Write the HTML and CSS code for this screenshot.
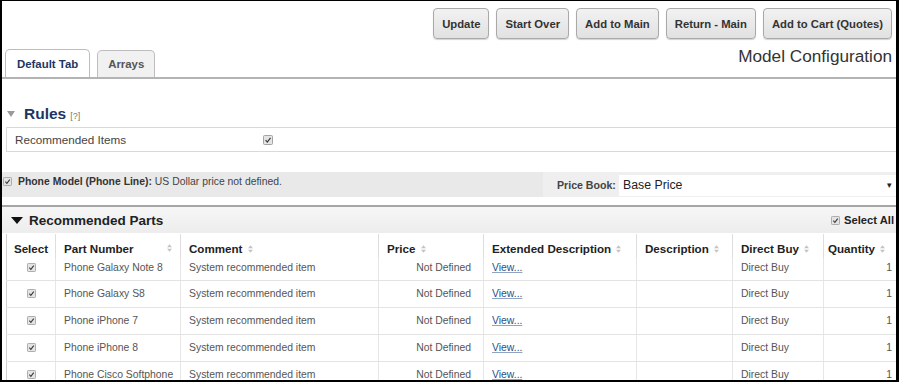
FILE: index.html
```html
<!DOCTYPE html>
<html>
<head>
<meta charset="utf-8">
<link rel="stylesheet" href="styles.css">
</head>
<body>
<div class="frame">
  <div class="toolbar">
    <button class="btn">Update</button>
    <button class="btn">Start Over</button>
    <button class="btn">Add to Main</button>
    <button class="btn">Return - Main</button>
    <button class="btn">Add to Cart (Quotes)</button>
  </div>

  <div class="tabbar">
    <div class="tab active">Default Tab</div>
    <div class="tab">Arrays</div>
    <div class="title">Model Configuration</div>
  </div>

  <div class="rules">
    <div class="rules-head">
      <svg class="tri-grey" viewBox="0 0 8 6"><path d="M0 0H8L4 6Z" fill="#9a9a9a"/></svg>
      <span class="rules-title">Rules</span>
      <span class="help">[?]</span>
    </div>
    <div class="rule-box">
      <span class="rule-label">Recommended Items</span>
      <svg class="cb" viewBox="0 0 10 10"><rect x=".5" y=".5" width="9" height="9" rx="1" fill="#e4e4e4" stroke="#a3a3a3"/><path d="M2.6 5.2L4.3 7L7.5 2.9" fill="none" stroke="#3a3a3a" stroke-width="1.2"/></svg>
    </div>
  </div>

  <div class="phone-row">
    <div class="phone-left">
      <svg class="cb" viewBox="0 0 10 10"><rect x=".5" y=".5" width="9" height="9" rx="1" fill="#e4e4e4" stroke="#a3a3a3"/><path d="M2.6 5.2L4.3 7L7.5 2.9" fill="none" stroke="#3a3a3a" stroke-width="1.2"/></svg>
      <span class="phone-text"><b>Phone Model (Phone Line):</b> US Dollar price not defined.</span>
    </div>
    <div class="pricebook">
      <span class="pb-label">Price Book:</span>
      <div class="select"><span>Base Price</span><span class="arrow">&#9662;</span></div>
    </div>
  </div>

  <div class="parts">
    <div class="parts-head">
      <div class="parts-title">
        <svg class="tri-black" viewBox="0 0 12 7"><path d="M0 0H12L6 7Z" fill="#111"/></svg>
        <span>Recommended Parts</span>
      </div>
      <div class="select-all">
        <svg class="cb" viewBox="0 0 10 10"><rect x=".5" y=".5" width="9" height="9" rx="1" fill="#e4e4e4" stroke="#a3a3a3"/><path d="M2.6 5.2L4.3 7L7.5 2.9" fill="none" stroke="#3a3a3a" stroke-width="1.2"/></svg>
        <span>Select All</span>
      </div>
    </div>

    <table class="grid">
      <colgroup>
        <col class="c-sel"><col class="c-part"><col class="c-com"><col class="c-price"><col class="c-ext"><col class="c-desc"><col class="c-buy"><col class="c-qty">
      </colgroup>
      <thead>
        <tr>
          <th class="center">Select</th>
          <th><span class="th-split"><span>Part Number</span><svg class="sort" viewBox="0 0 6 9"><path d="M3 0L6 3.5H0Z M3 9L6 5.5H0Z" fill="#c4c4c4"/></svg></span></th>
          <th>Comment <svg class="sort" viewBox="0 0 6 9"><path d="M3 0L6 3.5H0Z M3 9L6 5.5H0Z" fill="#c4c4c4"/></svg></th>
          <th>Price <svg class="sort" viewBox="0 0 6 9"><path d="M3 0L6 3.5H0Z M3 9L6 5.5H0Z" fill="#c4c4c4"/></svg></th>
          <th>Extended Description <svg class="sort" viewBox="0 0 6 9"><path d="M3 0L6 3.5H0Z M3 9L6 5.5H0Z" fill="#c4c4c4"/></svg></th>
          <th>Description <svg class="sort" viewBox="0 0 6 9"><path d="M3 0L6 3.5H0Z M3 9L6 5.5H0Z" fill="#c4c4c4"/></svg></th>
          <th>Direct Buy <svg class="sort" viewBox="0 0 6 9"><path d="M3 0L6 3.5H0Z M3 9L6 5.5H0Z" fill="#c4c4c4"/></svg></th>
          <th class="qty-h">Quantity <svg class="sort" viewBox="0 0 6 9"><path d="M3 0L6 3.5H0Z M3 9L6 5.5H0Z" fill="#c4c4c4"/></svg></th>
        </tr>
      </thead>
      <tbody>
        <tr class="first">
          <td class="center"><svg class="cb" viewBox="0 0 10 10"><rect x=".5" y=".5" width="9" height="9" rx="1" fill="#e4e4e4" stroke="#a3a3a3"/><path d="M2.6 5.2L4.3 7L7.5 2.9" fill="none" stroke="#3a3a3a" stroke-width="1.2"/></svg></td>
          <td>Phone Galaxy Note 8</td>
          <td>System recommended item</td>
          <td class="num">Not Defined</td>
          <td><a class="view">View...</a></td>
          <td></td>
          <td>Direct Buy</td>
          <td class="qty">1</td>
        </tr>
        <tr>
          <td class="center"><svg class="cb" viewBox="0 0 10 10"><rect x=".5" y=".5" width="9" height="9" rx="1" fill="#e4e4e4" stroke="#a3a3a3"/><path d="M2.6 5.2L4.3 7L7.5 2.9" fill="none" stroke="#3a3a3a" stroke-width="1.2"/></svg></td>
          <td>Phone Galaxy S8</td>
          <td>System recommended item</td>
          <td class="num">Not Defined</td>
          <td><a class="view">View...</a></td>
          <td></td>
          <td>Direct Buy</td>
          <td class="qty">1</td>
        </tr>
        <tr>
          <td class="center"><svg class="cb" viewBox="0 0 10 10"><rect x=".5" y=".5" width="9" height="9" rx="1" fill="#e4e4e4" stroke="#a3a3a3"/><path d="M2.6 5.2L4.3 7L7.5 2.9" fill="none" stroke="#3a3a3a" stroke-width="1.2"/></svg></td>
          <td>Phone iPhone 7</td>
          <td>System recommended item</td>
          <td class="num">Not Defined</td>
          <td><a class="view">View...</a></td>
          <td></td>
          <td>Direct Buy</td>
          <td class="qty">1</td>
        </tr>
        <tr>
          <td class="center"><svg class="cb" viewBox="0 0 10 10"><rect x=".5" y=".5" width="9" height="9" rx="1" fill="#e4e4e4" stroke="#a3a3a3"/><path d="M2.6 5.2L4.3 7L7.5 2.9" fill="none" stroke="#3a3a3a" stroke-width="1.2"/></svg></td>
          <td>Phone iPhone 8</td>
          <td>System recommended item</td>
          <td class="num">Not Defined</td>
          <td><a class="view">View...</a></td>
          <td></td>
          <td>Direct Buy</td>
          <td class="qty">1</td>
        </tr>
        <tr>
          <td class="center"><svg class="cb" viewBox="0 0 10 10"><rect x=".5" y=".5" width="9" height="9" rx="1" fill="#e4e4e4" stroke="#a3a3a3"/><path d="M2.6 5.2L4.3 7L7.5 2.9" fill="none" stroke="#3a3a3a" stroke-width="1.2"/></svg></td>
          <td>Phone Cisco Softphone</td>
          <td>System recommended item</td>
          <td class="num">Not Defined</td>
          <td><a class="view">View...</a></td>
          <td></td>
          <td>Direct Buy</td>
          <td class="qty">1</td>
        </tr>
      </tbody>
    </table>
  </div>
</div>
</body>
</html>
```

FILE: styles.css
```css
* { box-sizing: border-box; }

html, body {
  margin: 0;
  padding: 0;
  background: #fff;
}

body {
  font-family: "Liberation Sans", Arial, sans-serif;
  color: #444;
}

.frame {
  width: 899px;
  height: 382px;
  border-style: solid;
  border-color: #000;
  border-width: 1px 3px 2px 2px;
  overflow: hidden;
  background: #fff;
}

/* toolbar */
.toolbar {
  display: flex;
  justify-content: flex-end;
  gap: 7px;
  padding: 7px 4px 0 0;
}

.btn {
  height: 31px;
  padding: 0 8px;
  border: 1px solid #a9a9a9;
  border-radius: 4px;
  background: linear-gradient(#f2f2f2, #e1e1e1);
  box-shadow: 0 1px 1px rgba(0, 0, 0, 0.18);
  font-family: "Liberation Sans", Arial, sans-serif;
  font-weight: bold;
  font-size: 11.3px;
  color: #333;
}

/* tabs */
.tabbar {
  display: flex;
  align-items: flex-end;
  margin-top: 10px;
  padding-left: 3px;
  border-bottom: 2px solid #b4b4b4;
  height: 30px;
}

.tab {
  height: 28px;
  padding: 0 10px;
  margin-right: 7px;
  border: 1px solid #bdbdbd;
  border-bottom: none;
  border-radius: 5px 5px 0 0;
  background: #f1f1f1;
  font-weight: bold;
  font-size: 11.4px;
  line-height: 28px;
  color: #555;
}

.tab.active {
  background: #fff;
  color: #1c3563;
  padding: 0 11px;
}

.tab:not(.active) {
  height: 27px;
  line-height: 26px;
}

.title {
  margin-left: auto;
  align-self: flex-start;
  margin-top: -3px;
  padding-right: 4px;
  font-size: 17.2px;
  line-height: 20px;
  color: #333;
}

/* rules */
.rules {
  padding: 25px 0 0 4px;
}

.rules-head {
  display: flex;
  align-items: center;
  height: 20px;
  padding-left: 1px;
}

.tri-grey {
  width: 8px;
  height: 6px;
  margin-right: 9px;
}

.rules-title {
  font-weight: bold;
  font-size: 15.5px;
  color: #1c3563;
}

.help {
  font-size: 9px;
  color: #777;
  margin-left: 4px;
  margin-top: 4px;
}

.rule-box {
  display: flex;
  align-items: center;
  margin-top: 3px;
  height: 25px;
  border: 1px solid #d9d9d9;
  border-right: none;
  padding-left: 8px;
}

.rule-label {
  width: 248px;
  font-size: 11.7px;
  color: #444;
}

.cb {
  width: 10px;
  height: 10px;
  display: block;
  flex: none;
}

/* phone row */
.phone-row {
  display: flex;
  margin-top: 20px;
  height: 25px;
  background: #e9e9e9;
}

.phone-left {
  display: flex;
  align-items: center;
  align-self: flex-start;
  padding: 3px 0 0 1px;
  flex: 1;
}

.phone-left .cb {
  width: 9px;
  height: 9px;
}

.phone-text {
  margin-left: 6px;
  font-size: 10.4px;
  line-height: 13px;
  color: #444;
}

.phone-text b {
  color: #333;
}

.pricebook {
  display: flex;
  align-items: center;
  width: 353px;
  background: #efefef;
  padding-left: 14px;
}

.pb-label {
  font-weight: bold;
  font-size: 10.6px;
  color: #444;
  width: 62px;
}

.select {
  flex: 1;
  height: 21px;
  margin-top: 1px;
  background: #fff;
  display: flex;
  align-items: center;
  justify-content: space-between;
  padding: 0 4px 0 4px;
  font-size: 12.3px;
  color: #222;
}

.arrow {
  font-size: 9px;
  color: #222;
}

/* parts */
.parts {
  margin-top: 8px;
  border-top: 2px solid #a6a6a6;
}

.parts-head {
  display: flex;
  align-items: center;
  justify-content: space-between;
  height: 26px;
  background: linear-gradient(#f6f6f6, #ededed);
  padding: 0 0 0 9px;
}

.parts-title {
  display: flex;
  align-items: center;
  font-weight: bold;
  font-size: 13.5px;
  color: #222;
}

.tri-black {
  width: 12px;
  height: 7px;
  margin-right: 6px;
}

.select-all {
  display: flex;
  align-items: center;
  font-weight: bold;
  font-size: 11.2px;
  color: #222;
  margin-right: 2px;
}

.select-all .cb {
  width: 9px;
  height: 9px;
  margin-right: 4px;
}

/* table */
.grid {
  margin-left: 4px;
  margin-top: 1px;
  width: 890px;
  table-layout: fixed;
  border-collapse: collapse;
  border-left: 1px solid #cfcfcf;
}

.c-sel { width: 49px; }
.c-part { width: 125px; }
.c-com { width: 198px; }
.c-price { width: 105px; }
.c-ext { width: 153px; }
.c-desc { width: 96px; }
.c-buy { width: 91px; }
.c-qty { width: 73px; }

.grid th {
  height: 24px;
  padding: 4px 8px 0 8px;
  text-align: left;
  font-weight: bold;
  font-size: 11.6px;
  color: #222;
  border-right: 1px solid #dedede;
  white-space: nowrap;
}

.grid th.center, .grid td.center {
  text-align: center;
  padding-left: 0;
  padding-right: 0;
}

.grid th.qty-h {
  padding-left: 4px;
}

.th-split {
  display: flex;
  align-items: center;
  justify-content: space-between;
}

.sort {
  width: 5px;
  height: 8px;
  vertical-align: 0;
  margin-left: 2px;
}

.grid td {
  height: 27px;
  padding: 0 8px;
  font-size: 10.4px;
  color: #555;
  border-right: 1px solid #e6e6e6;
  border-bottom: 1px solid #e3e3e3;
  white-space: nowrap;
  vertical-align: middle;
}

.grid tr.first td {
  height: 22px;
  padding-bottom: 3px;
}

.grid td .cb {
  width: 9px;
  height: 9px;
  margin: 0 auto;
}

.grid td.num {
  text-align: right;
  padding-right: 12px;
}

.grid td.qty {
  text-align: right;
  padding-right: 4px;
}

.view {
  color: #2c4f86;
  text-decoration: underline;
  text-decoration-color: #8fa3c4;
}
```
